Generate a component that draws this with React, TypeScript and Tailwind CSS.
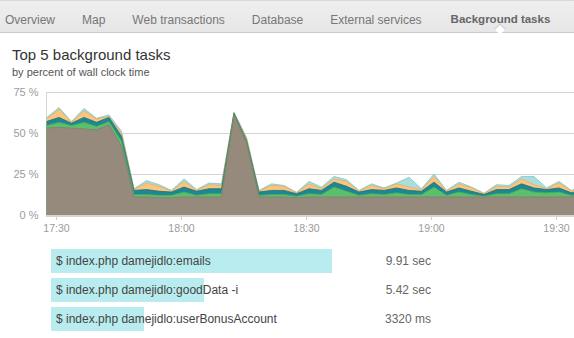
import React from 'react';

const TABS = ['Overview', 'Map', 'Web transactions', 'Database', 'External services', 'Background tasks'];

// layer thickness in percent: brown, green, teal, orange, cyan
const SERIES: number[][] = [
  [53, 1.5, 2.5, 1.5, 0.8],
  [53.5, 3, 3, 5, 1],
  [53, 1.5, 1.5, 0.5, 0.5],
  [52.5, 4, 3, 4, 1.5],
  [52, 2, 2.5, 2, 0.5],
  [55, 2, 2.5, 0.5, 1],
  [42, 3, 3, 2, 1],
  [11, 1.5, 2.5, 0.5, 0.5],
  [11, 1.5, 3, 4, 1.5],
  [10.5, 1.5, 2.5, 3, 1],
  [10.5, 1.5, 2, 0.5, 0.5],
  [11, 3, 3, 3.5, 1.5],
  [11, 1, 2.5, 0.5, 0.5],
  [11, 2, 3, 2.5, 1],
  [11, 2, 3, 2, 1],
  [61, 0.3, 0.8, 0.3, 0.2],
  [44, 0.5, 1, 1.5, 0.3],
  [11, 1, 2, 0.5, 0.5],
  [11, 1.5, 2.5, 3, 1],
  [11, 1.5, 2.5, 2.5, 0.5],
  [10.5, 1, 1.5, 0.5, 0.3],
  [11, 2, 3, 3, 1.5],
  [11, 1.5, 2.5, 1, 1],
  [11, 6, 3, 2, 1.5],
  [11, 3.5, 3, 3, 1],
  [11, 1, 2, 0.5, 0.5],
  [11, 2, 2.5, 2.5, 1],
  [11, 1.5, 2.5, 1, 0.5],
  [11, 2.5, 3, 2.5, 0.5],
  [11, 1.5, 2.5, 2, 6],
  [11, 1.5, 2, 1, 0.5],
  [11, 6, 3, 3.5, 1.5],
  [11, 1, 2, 0.5, 0.5],
  [11, 3, 2.5, 2.5, 1],
  [11, 1.5, 2, 2, 0.5],
  [11, 0.5, 1, 0.5, 0.3],
  [11, 2, 2.5, 2, 1],
  [11, 2, 2.5, 1.5, 1],
  [11, 5, 3, 3, 1.5],
  [11, 3, 2.5, 2, 5],
  [11, 2.5, 2, 0.5, 0.5],
  [11, 3, 2.5, 3, 1],
  [11, 1, 1.5, 1, 0.5],
  [11, 2, 2.5, 2, 1],
];

const LAYERS = [
  { fill: '#958a7c', stroke: '#877c6f' },
  { fill: '#5cbf6b', stroke: '#4aa95a' },
  { fill: '#1f8793', stroke: '#19717b' },
  { fill: '#fbc57e', stroke: '#e9ad62' },
  { fill: '#a7dfdf', stroke: '#86c4c4' },
];

const TASKS = [
  { name: '$ index.php damejidlo:emails', value: '9.91 sec', width: 281 },
  { name: '$ index.php damejidlo:goodData -i', value: '5.42 sec', width: 153 },
  { name: '$ index.php damejidlo:userBonusAccount', value: '3320 ms', width: 93 },
];

const x = (i: number) => 46.5 + i * 12.5;
const y = (p: number) => 131 - p * 1.64;

function StackedChart() {
  const cum = SERIES.map((row) => {
    let s = 0;
    return row.map((v) => (s += v));
  });
  const base = y(0);

  return (
    <svg width={574} height={156} className="block" style={{ fontFamily: '"Liberation Sans", Arial, sans-serif' }}>
      {/* grid */}
      {[75, 50, 25].map((p) => (
        <line key={p} x1={46} x2={574} y1={y(p) + 0.5} y2={y(p) + 0.5} stroke="#d4d4d4" strokeWidth={1} />
      ))}
      <line x1={46.5} x2={46.5} y1={y(75)} y2={base} stroke="#d4d4d4" strokeWidth={1} />

      {/* areas, biggest first */}
      {[4, 3, 2, 1, 0].map((k) => {
        const top = cum.map((c, i) => `${x(i)},${y(c[k])}`).join(' ');
        const pts = `${x(0)},${base} ${top} ${x(cum.length - 1)},${base}`;
        return <polygon key={k} points={pts} fill={LAYERS[k].fill} />;
      })}
      {[4, 3, 2, 1, 0].map((k) => (
        <polyline
          key={`l${k}`}
          points={cum.map((c, i) => `${x(i)},${y(c[k])}`).join(' ')}
          fill="none"
          stroke={LAYERS[k].stroke}
          strokeWidth={0.8}
          strokeLinejoin="round"
        />
      ))}

      {/* x axis */}
      <rect x={46} y={base} width={528} height={2} fill="#d4d4d4" />
      {[56.5, 181.5, 306.5, 431.5, 556.5].map((tx, i) => (
        <g key={tx}>
          <line x1={tx} x2={tx} y1={base + 2} y2={base + 5} stroke="#cfcfcf" strokeWidth={1} />
          <text x={tx} y={148} textAnchor="middle" fontSize={10.5} fill="#9b9b9b">
            {['17:30', '18:00', '18:30', '19:00', '19:30'][i]}
          </text>
        </g>
      ))}

      {/* y labels */}
      {[75, 50, 25, 0].map((p) => (
        <text key={p} x={38.5} y={y(p) + 4} textAnchor="end" fontSize={11} fill="#9b9b9b">
          {p} %
        </text>
      ))}
    </svg>
  );
}

export default function App() {
  return (
    <div className="w-[574px] h-[338px] overflow-hidden bg-white font-['Liberation_Sans',Arial,sans-serif]">
      {/* Tab strip */}
      <div className="relative h-[33px] border-t border-t-[#d8d8d8] border-b border-b-[#c9c9c9] bg-gradient-to-b from-[#efefef] to-[#e6e6e6] flex items-center gap-[27px] pl-[5px] pt-[7px] text-[12px] text-[#777]">
        {TABS.map((t) => {
          const active = t === 'Background tasks';
          return (
            <div key={t} className={`relative whitespace-nowrap ${active ? 'font-bold text-[11.5px] text-[#666] ml-[2px]' : ''}`}>
              {t}
              {active && (
                <span className="absolute left-1/2 -translate-x-1/2 top-[14px] w-[8px] h-[8px] bg-white border-l border-t border-[#c9c9c9] rotate-45" />
              )}
            </div>
          );
        })}
      </div>

      {/* Heading */}
      <div className="pl-3 pt-[13px]">
        <h2 className="text-[15px] leading-[18px] text-[#333]">Top 5 background tasks</h2>
        <p className="text-[11px] leading-[14px] text-[#555] mt-[1px]">by percent of wall clock time</p>
      </div>

      {/* Chart */}
      <div className="mt-[5px]">
        <StackedChart />
      </div>

      {/* Task list */}
      <div className="flex flex-col gap-[5px] pl-[51px] mt-[9px]">
        {TASKS.map((t) => (
          <div key={t.name} className="flex items-center h-6">
            <div className="relative w-[281px] h-full flex items-center">
              <div className="absolute inset-y-0 left-0 bg-[#b9ecee]" style={{ width: t.width }} />
              <span className="relative pl-[5px] text-[12px] text-[#444] whitespace-nowrap">{t.name}</span>
            </div>
            <div className="w-[99px] text-right text-[12px] text-[#666]">{t.value}</div>
          </div>
        ))}
      </div>
    </div>
  );
}
